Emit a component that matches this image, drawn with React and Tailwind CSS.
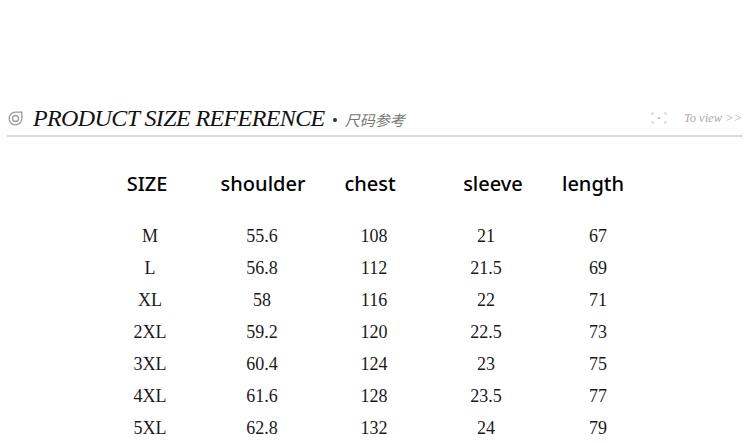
const headers = [
  { label: 'SIZE', w: 'w-[106px]' },
  { label: 'shoulder', w: 'w-[126px]' },
  { label: 'chest', w: 'w-[88px]' },
  { label: 'sleeve', w: 'w-[158px]' },
  { label: 'length', w: 'w-[42px]' },
];

const rows = [
  ['M', '55.6', '108', '21', '67'],
  ['L', '56.8', '112', '21.5', '69'],
  ['XL', '58', '116', '22', '71'],
  ['2XL', '59.2', '120', '22.5', '73'],
  ['3XL', '60.4', '124', '23', '75'],
  ['4XL', '61.6', '128', '23.5', '77'],
  ['5XL', '62.8', '132', '24', '79'],
];

function RingIcon() {
  return (
    <svg width="15" height="15" viewBox="0 0 15 15" fill="none" stroke="#9a9a9a" strokeWidth="1.3">
      <path d="M7.5 1.2 A6.3 6.3 0 1 0 13.8 7.5 L13.8 1.2 Z" />
      <circle cx="7.5" cy="7.5" r="3" />
    </svg>
  );
}

function FrameIcon() {
  return (
    <svg width="16" height="12" viewBox="0 0 16 12" fill="none" stroke="#c4c4c4" strokeWidth="1">
      <path d="M1 3V1h2M13 1h2v2M15 9v2h-2M3 11H1V9" />
      <rect x="7" y="5" width="2" height="2" fill="#bdbdbd" stroke="none" />
    </svg>
  );
}

export default function App() {
  return (
    <div className="w-[750px] h-[443px] bg-white overflow-hidden">
      {/* section title */}
      <div className="pt-[105px] px-[7px]">
        <div className="flex items-center h-[26px]">
          <div className="ml-[1px] mt-[1px]">
            <RingIcon />
          </div>
          <span className="ml-[10px] text-[24px] italic tracking-[-0.6px] text-[#111] leading-none font-['Liberation_Serif',serif]">
            PRODUCT SIZE REFERENCE
          </span>
          <span className="ml-[8px] mt-[3px] w-[4px] h-[4px] rounded-full bg-[#333]" />
          <span className="ml-[8px] mt-[2px] text-[15px] italic text-[#777] leading-none font-['Noto_Sans_CJK_SC',sans-serif]">
            尺码参考
          </span>
          <div className="ml-auto flex items-center">
            <FrameIcon />
            <span className="ml-[17px] mr-[1px] text-[12.5px] italic text-[#aaa] font-['Liberation_Serif',serif]">
              To view &gt;&gt;
            </span>
          </div>
        </div>
        <div className="mt-[4px] h-[2px] bg-[#dcdcdc]" />
      </div>

      {/* size table */}
      <div className="pl-[94px] pt-[31px]">
        <div className="flex h-[32px] items-center text-[20px] font-medium text-black font-['Noto_Sans',sans-serif]">
          {headers.map((h) => (
            <div key={h.label} className={`${h.w} flex justify-center whitespace-nowrap`}>
              {h.label}
            </div>
          ))}
        </div>
        <div className="mt-[20px] font-['Liberation_Serif',serif] text-[18px] text-[#1a1a1a]">
          {rows.map((r) => (
            <div key={r[0]} className="grid grid-cols-[112px_112px_112px_112px_112px] h-[32px] items-center">
              {r.map((c, i) => (
                <div key={i} className="text-center">{c}</div>
              ))}
            </div>
          ))}
        </div>
      </div>
    </div>
  );
}
